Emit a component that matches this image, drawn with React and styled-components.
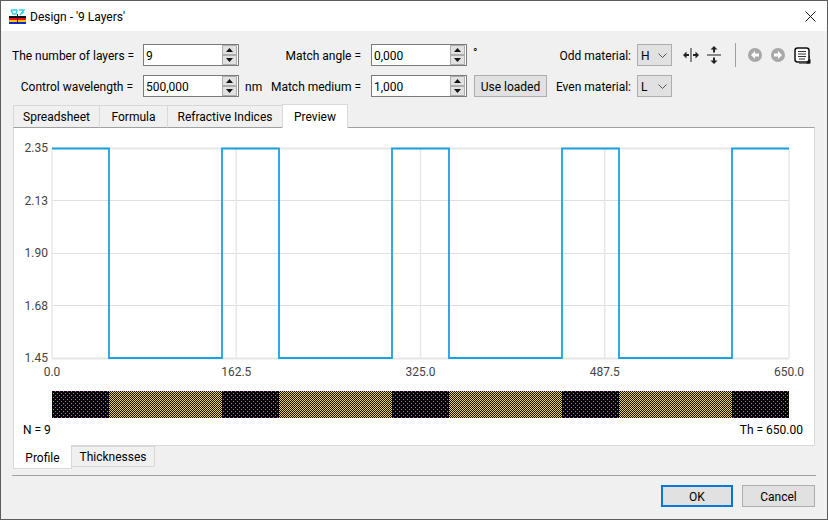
import React from "react"
import styled, { createGlobalStyle } from "styled-components"

const FONT = `Roboto, "Noto Sans", sans-serif`
const H = 50
const L = 100
const LAYERS = [H, L, H, L, H, L, H, L, H]
const TICKS_Y = ["2.35", "2.13", "1.90", "1.68", "1.45"]
const TICKS_X = ["0.0", "162.5", "325.0", "487.5", "650.0"]

const px = t => Math.round(52 + (t * 737) / 650)

// start offset of every layer
const offsets = LAYERS.reduce((acc, d) => [...acc, acc[acc.length - 1] + d], [0])

const stepPoints = () => {
  const pts = []
  LAYERS.forEach((d, i) => {
    const y = i % 2 === 0 ? 148.5 : 358
    pts.push(`${px(offsets[i])},${y}`, `${px(offsets[i + 1])},${y}`)
  })
  return pts.join(" ")
}

const Spin = ({ value }) => (
  <SpinBox>
    <SpinValue>{value}</SpinValue>
    <Stepper>
      <StepButton>
        <svg width="7" height="4" viewBox="0 0 7 4">
          <path d="M3.5 0 L7 4 H0 Z" fill="#111" />
        </svg>
      </StepButton>
      <StepButton>
        <svg width="7" height="4" viewBox="0 0 7 4">
          <path d="M0 0 H7 L3.5 4 Z" fill="#111" />
        </svg>
      </StepButton>
    </Stepper>
  </SpinBox>
)

const Combo = ({ value }) => (
  <Select>
    <span>{value}</span>
    <svg width="9" height="5" viewBox="0 0 9 5">
      <path d="M0.5 0.5 L4.5 4.5 L8.5 0.5" fill="none" stroke="#555" />
    </svg>
  </Select>
)

const AppIcon = () => (
  <svg width="17" height="15" viewBox="0 0 17 15">
    <path d="M2 1 H8 M2 1 L4 5 H7 L8 1 M10 1 H15 L11 6 M12 5 L15 3" fill="none" stroke="#2fd3e8" strokeWidth="1.4" />
    <rect x="0" y="7" width="17" height="2" fill="#111" />
    <rect x="0" y="9" width="17" height="2" fill="#e8141c" />
    <rect x="0" y="11" width="17" height="2" fill="#f8c800" />
    <rect x="0" y="13" width="17" height="2" fill="#1428c8" />
    <rect x="8" y="5" width="1" height="10" fill="#222" />
  </svg>
)

const SplitH = () => (
  <svg width="16" height="14" viewBox="0 0 16 14">
    <rect x="7" y="0" width="2" height="14" fill="#888" />
    <path d="M0 7 L3.5 3.5 V6 H6 V8 H3.5 V10.5 Z M16 7 L12.5 3.5 V6 H10 V8 H12.5 V10.5 Z" fill="#222" />
  </svg>
)

const SplitV = () => (
  <svg width="16" height="18" viewBox="0 0 16 18">
    <rect x="1" y="8" width="14" height="2" fill="#888" />
    <path d="M8 0 L4.5 3.5 H7 V6.5 H9 V3.5 H11.5 Z M8 18 L4.5 14.5 H7 V11.5 H9 V14.5 H11.5 Z" fill="#222" />
  </svg>
)

const NavIcon = ({ back }) => (
  <svg width="14" height="14" viewBox="0 0 14 14">
    <circle cx="7" cy="7" r="7" fill="#a8a8a8" />
    <path
      d={back ? "M3 7 L7 3 V5.5 H11 V8.5 H7 V11 Z" : "M11 7 L7 3 V5.5 H3 V8.5 H7 V11 Z"}
      fill="#fff"
    />
  </svg>
)

const NoteIcon = () => (
  <svg width="17" height="17" viewBox="0 0 17 17">
    <path d="M5 16.5 H15.5 V9" fill="none" stroke="#777" />
    <rect x="1" y="1" width="14" height="14" rx="2.5" fill="#fff" stroke="#111" strokeWidth="1.5" />
    <path d="M4 4.5 H12 M4 7 H12 M4 9.5 H12 M5 12 H11" stroke="#333" strokeWidth="1.2" />
    <path d="M12 16.5 L16.5 16.5 L16.5 12 Z" fill="#111" />
  </svg>
)

const Chart = () => (
  <svg width="800" height="256" viewBox="14 128 800 256">
    {TICKS_Y.map((t, i) => {
      const y = 148 + i * 52.5
      const edge = i === 0 || i === 4
      return (
        <React.Fragment key={t}>
          <line x1="52" x2="789" y1={Math.floor(y) + 0.5} y2={Math.floor(y) + 0.5} stroke={edge ? "#e6e6e6" : "#e0e0e0"} strokeWidth={edge ? 2 : 1} />
          <AxisText x="48" y={y + 4} textAnchor="end">{t}</AxisText>
        </React.Fragment>
      )
    })}
    {TICKS_X.map((t, i) => {
      const x = 52 + i * 184.25
      return (
        <React.Fragment key={t}>
          <line x1={x} x2={x} y1="148" y2="358" stroke="#e8e8e8" strokeWidth="1.5" />
          <AxisText x={x} y="376" textAnchor="middle">{t}</AxisText>
        </React.Fragment>
      )
    })}
    <polyline points={stepPoints()} fill="none" stroke="#1ba1e2" strokeWidth="1.8" />
  </svg>
)

const LayerBar = () => (
  <BarSvg width="737" height="27" viewBox="52 391 737 27" shapeRendering="crispEdges">
    <defs>
      <pattern id="odd" width="4" height="4" patternUnits="userSpaceOnUse">
        <rect width="4" height="4" fill="#000" />
        <rect x="1" y="1" width="1" height="1" fill="#f23cf2" />
        <rect x="3" y="3" width="1" height="1" fill="#f23cf2" />
      </pattern>
      <pattern id="even" width="2" height="2" patternUnits="userSpaceOnUse">
        <rect width="2" height="2" fill="#000" />
        <rect x="0" y="0" width="1" height="1" fill="#ffd800" />
        <rect x="1" y="1" width="1" height="1" fill="#ffd800" />
      </pattern>
    </defs>
    {LAYERS.map((d, i) => (
      <rect
        key={i}
        x={px(offsets[i])}
        y="391"
        width={px(offsets[i + 1]) - px(offsets[i])}
        height="27"
        fill={i % 2 === 0 ? "url(#odd)" : "url(#even)"}
      />
    ))}
  </BarSvg>
)

export default function App() {
  return (
    <Window>
      <GlobalStyle />
      <TitleBar>
        <AppIcon />
        <TitleText>Design - '9 Layers'</TitleText>
        <CloseIcon width="11" height="11" viewBox="0 0 11 11">
          <path d="M0.5 0.5 L10.5 10.5 M10.5 0.5 L0.5 10.5" stroke="#111" strokeWidth="1" />
        </CloseIcon>
      </TitleBar>

      <Form>
        <Label $pad={10}>The number of layers =</Label>
        <Spin value="9" />
        <Label $pad={10}>Match angle =</Label>
        <Spin value="0,000" />
        <Degree>°</Degree>
        <Label $pad={6}>Odd material:</Label>
        <Combo value="H" />
        <Tools>
          <IconGroup $gap={7}>
            <SplitH />
            <SplitV />
          </IconGroup>
          <ToolSeparator />
          <IconGroup $gap={9}>
            <NavIcon back />
            <NavIcon />
            <NoteIcon />
          </IconGroup>
        </Tools>

        <Label $pad={10}>Control wavelength =</Label>
        <Spin value="500,000" />
        <UnitCell>
          <span>nm</span>
          <span>Match medium =</span>
        </UnitCell>
        <Spin value="1,000" />
        <LoadCell>
          <SmallButton>Use loaded</SmallButton>
        </LoadCell>
        <Label $pad={6}>Even material:</Label>
        <Combo value="L" />
      </Form>

      <TabBar>
        <Tab $width={87}>Spreadsheet</Tab>
        <Tab $width={68}>Formula</Tab>
        <Tab $width={115}>Refractive Indices</Tab>
        <Tab $width={66} $active>Preview</Tab>
      </TabBar>

      <Pane>
        <Chart />
        <LayerBar />
        <Summary>
          <span>N = 9</span>
          <span>Th = 650.00</span>
        </Summary>
      </Pane>

      <BottomTabs>
        <BottomTab $width={59} $active>Profile</BottomTab>
        <BottomTab $width={83}>Thicknesses</BottomTab>
      </BottomTabs>

      <Divider />

      <Footer>
        <DialogButton $width={72} $primary>OK</DialogButton>
        <DialogButton $width={73}>Cancel</DialogButton>
      </Footer>
    </Window>
  )
}

const GlobalStyle = createGlobalStyle`
  html, body {
    margin: 0;
    padding: 0;
    background: #f0f0f0;
  }
  * {
    box-sizing: border-box;
  }
`

const Window = styled.div`
  width: 828px;
  height: 520px;
  border: 1px solid #5c5c5c;
  background: #f0f0f0;
  color: #000;
  font-family: ${FONT};
  font-size: 12px;
  overflow: hidden;
`

const TitleBar = styled.div`
  height: 30px;
  background: #fff;
  display: flex;
  align-items: center;
  padding: 1px 11px 0 8px;
`

const TitleText = styled.div`
  margin-left: 4px;
  flex: 1;
`

const CloseIcon = styled.svg`
  display: block;
`

const Form = styled.div`
  display: grid;
  grid-template-columns: 131px 96px 132px 96px 80px 90px 35px auto;
  grid-template-rows: 22px 22px;
  row-gap: 9px;
  padding: 13px 0 0 11px;
  align-items: center;
`

const Label = styled.div`
  text-align: right;
  padding: 1px ${props => props.$pad}px 0 0;
  white-space: nowrap;
`

const UnitCell = styled.div`
  display: flex;
  justify-content: space-between;
  padding: 1px 10px 0 6px;
  white-space: nowrap;
`

const LoadCell = styled.div`
  display: flex;
  justify-content: flex-end;
`

const Degree = styled.div`
  padding-left: 6px;
  margin-top: -4px;
`

const SpinBox = styled.div`
  height: 22px;
  border: 1px solid #7a7a7a;
  background: #fff;
  display: flex;
  align-items: center;
  justify-content: space-between;
  padding: 0 1px 0 2px;
`

const SpinValue = styled.span`
  color: #000;
  padding-top: 1px;
`

const Stepper = styled.div`
  display: flex;
  flex-direction: column;
  gap: 0;
  width: 15px;
  height: 20px;
`

const StepButton = styled.div`
  flex: 1;
  background: #e1e1e1;
  border: 1px solid #adadad;
  display: flex;
  align-items: center;
  justify-content: center;
`

const Select = styled.div`
  width: 35px;
  height: 22px;
  background: #e1e1e1;
  border: 1px solid #adadad;
  display: flex;
  align-items: center;
  justify-content: space-between;
  padding: 1px 4px 0 3px;
`

const SmallButton = styled.div`
  width: 73px;
  height: 22px;
  background: #e1e1e1;
  border: 1px solid #adadad;
  padding-top: 1px;
  display: flex;
  align-items: center;
  justify-content: center;
`

const Tools = styled.div`
  display: flex;
  align-items: center;
  padding-left: 11px;
`

const IconGroup = styled.div`
  display: flex;
  align-items: center;
  gap: ${props => props.$gap}px;
`

const ToolSeparator = styled.div`
  width: 1px;
  height: 24px;
  background: #a0a0a0;
  margin: 0 12px 0 13px;
`

const TabBar = styled.div`
  display: flex;
  align-items: flex-end;
  height: 24px;
  margin: 7px 0 0 12px;
  position: relative;
`

const Tab = styled.div`
  width: ${props => props.$width}px;
  height: ${props => (props.$active ? 24 : 23)}px;
  background: ${props => (props.$active ? "#fff" : "#f0f0f0")};
  border: 1px solid #d9d9d9;
  border-left-width: ${props => (props.$active ? 1 : 0)}px;
  border-bottom: ${props => (props.$active ? "none" : "1px solid #a0a0a0")};
  display: flex;
  align-items: center;
  justify-content: center;
  margin-left: ${props => (props.$active ? "-1px" : "0")};
  &:first-child {
    border-left-width: 1px;
  }
`

const Pane = styled.div`
  width: 802px;
  height: 319px;
  margin-left: 12px;
  background: #fff;
  border: 1px solid #d9d9d9;
  border-top: 1px solid #a0a0a0;
  display: flex;
  flex-direction: column;
  margin-top: -1px;
`

const AxisText = styled.text`
  font-family: ${FONT};
  font-size: 12px;
  fill: #444;
`

const BarSvg = styled.svg`
  display: block;
  flex: none;
  margin: 7px 0 0 38px;
`

const Summary = styled.div`
  display: flex;
  justify-content: space-between;
  padding: 5px 11px 0 9px;
`

const BottomTabs = styled.div`
  display: flex;
  align-items: flex-start;
  margin: -1px 0 0 12px;
`

const BottomTab = styled.div`
  width: ${props => props.$width}px;
  height: ${props => (props.$active ? 24 : 21)}px;
  margin-top: ${props => (props.$active ? 0 : 1)}px;
  padding-top: ${props => (props.$active ? 2 : 0)}px;
  background: ${props => (props.$active ? "#fff" : "#f0f0f0")};
  border: 1px solid #d9d9d9;
  border-top: ${props => (props.$active ? "none" : "1px solid #d9d9d9")};
  border-left-width: ${props => (props.$active ? 1 : 0)}px;
  display: flex;
  align-items: center;
  justify-content: center;
`

const Divider = styled.div`
  height: 1px;
  margin: 6px 11px 0 11px;
  background: #a0a0a0;
`

const Footer = styled.div`
  display: flex;
  justify-content: flex-end;
  gap: 9px;
  padding: 9px 12px 0 0;
`

const DialogButton = styled.div`
  width: ${props => props.$width}px;
  height: 22px;
  padding-top: 1px;
  background: #e1e1e1;
  border: ${props => (props.$primary ? "2px solid #0078d7" : "1px solid #adadad")};
  display: flex;
  align-items: center;
  justify-content: center;
`
